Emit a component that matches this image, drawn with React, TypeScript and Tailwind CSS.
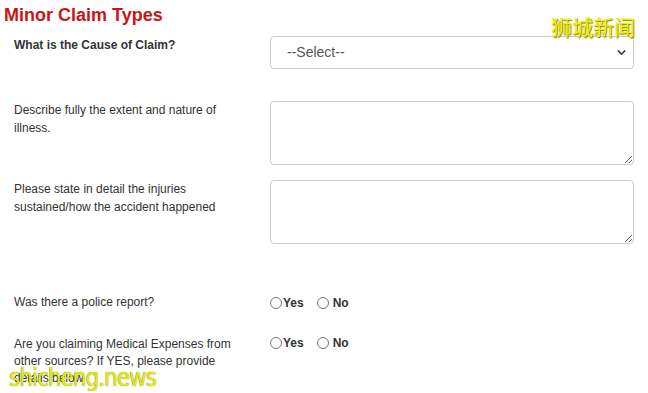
import { ChevronDown } from "lucide-react";

function Radio({ label, space = 1 }: { label: string; space?: number }) {
  return (
    <label className="flex items-center">
      <span className="h-[12px] w-[12px] rounded-full border border-[#767676] bg-white" />
      <span
        className={(space > 1 ? "ml-[4px]" : "ml-[1px]") + " font-bold text-[12px] text-[#333]"}
      >
        {label}
      </span>
    </label>
  );
}

export default function App() {
  return (
    <div
      className="relative h-[393px] w-[648px] overflow-hidden bg-white text-[#333]"
      style={{ fontFamily: '"Liberation Sans", Arial, sans-serif' }}
    >
      <h1 className="pl-[4px] pt-[4px] text-[18px] font-bold leading-[22px] text-[#cc1414]">
        Minor Claim Types
      </h1>

      <div className="flex flex-col pl-[14px] pr-[14px]">
        {/* cause of claim */}
        <div className="mt-[10px] flex">
          <div className="w-[256px] pt-[1px] text-[12px] font-bold leading-[17px]">
            What is the Cause of Claim?
          </div>
          <div className="relative ml-[1px]">
            <select className="h-[33px] w-[364px] appearance-none rounded-[4px] border border-[#ccc] bg-white pl-[16px] text-[14px] text-[#555] outline-none">
              <option>--Select--</option>
            </select>
            <ChevronDown
              className="pointer-events-none absolute right-[6px] top-[10px] h-[13px] w-[13px] text-[#444]"
              strokeWidth={3}
            />
          </div>
        </div>

        {/* illness */}
        <div className="mt-[32px] flex">
          <div className="w-[256px] pr-[20px] text-[12px] leading-[18px]">
            Describe fully the extent and nature of illness.
          </div>
          <textarea className="h-[64px] w-[365px] rounded-[4px] border border-[#ccc] bg-white outline-none" />
        </div>

        {/* injuries */}
        <div className="mt-[15px] flex">
          <div className="w-[256px] pr-[20px] text-[12px] leading-[18px]">
            Please state in detail the injuries sustained/how the accident happened
          </div>
          <textarea className="h-[64px] w-[365px] rounded-[4px] border border-[#ccc] bg-white outline-none" />
        </div>

        {/* police report */}
        <div className="mt-[49px] flex">
          <div className="w-[256px] text-[12px] leading-[18px]">Was there a police report?</div>
          <div className="flex items-center gap-[13px] pt-[1px]">
            <Radio label="Yes" />
            <Radio label="No" space={2} />
          </div>
        </div>

        {/* medical expenses */}
        <div className="mt-[24px] flex">
          <div className="w-[256px] pr-[20px] text-[12px] leading-[17px]">
            Are you claiming Medical Expenses from other sources? If YES, please provide details below
          </div>
          <div className="-mt-[2px] flex items-start gap-[13px]">
            <Radio label="Yes" />
            <Radio label="No" space={2} />
          </div>
        </div>
      </div>

      {/* watermarks */}
      <div
        className="absolute right-[13px] top-[11px] text-[21px] text-[#eef000]"
        style={{
          fontFamily: '"Noto Sans CJK SC", sans-serif',
          textShadow: "1px 1px 1px #7a7a00",
        }}
      >
        狮城新闻
      </div>
      <div
        className="absolute left-[9px] top-[360px] text-[24px] tracking-[-1px] text-[#e8ec00]"
        style={{ fontFamily: '"DejaVu Sans Condensed", "DejaVu Sans", sans-serif', textShadow: "0 0 1px #555" }}
      >
        shicheng.news
      </div>
    </div>
  );
}
